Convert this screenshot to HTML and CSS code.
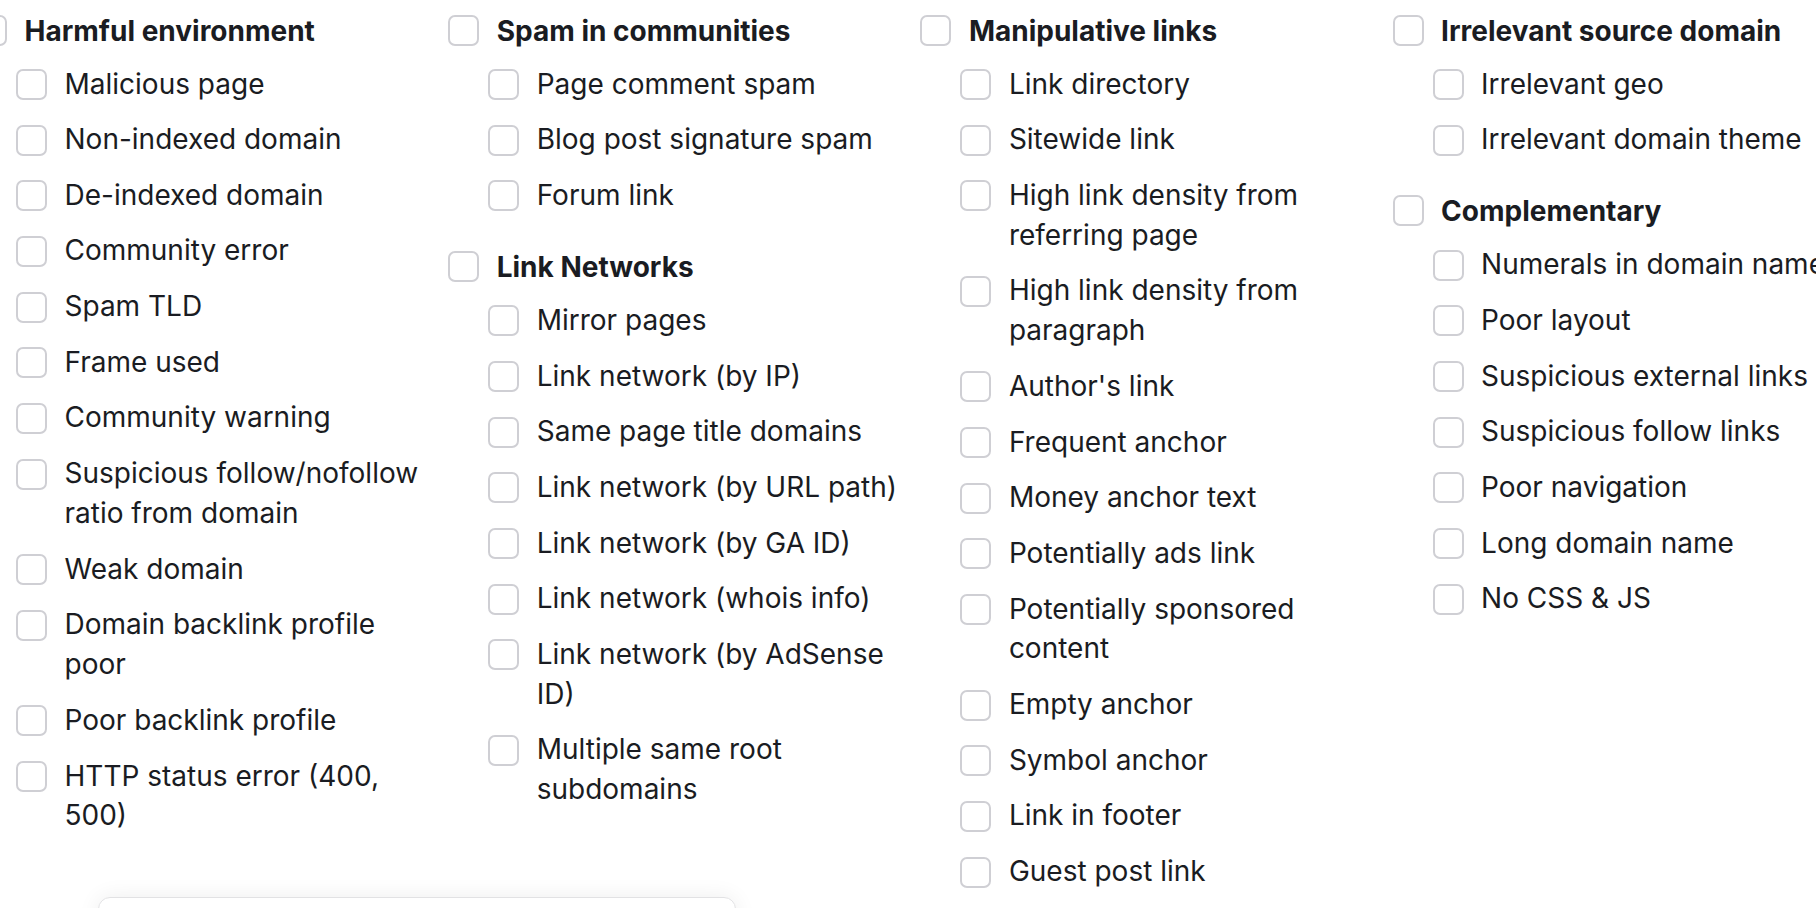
FILE: index.html
```html
<!DOCTYPE html>
<html lang="en">
<head>
<meta charset="utf-8">
<title>Link filters</title>
<link rel="stylesheet" href="styles.css">
</head>
<body>
<div class="page">
  <div class="grid">
    <div class="col">
      <section class="group">
        <label class="row head"><span class="box"></span><span class="txt">Harmful environment</span></label>
        <ul class="children">
          <li class="row"><span class="box"></span><span class="txt">Malicious page</span></li>
          <li class="row"><span class="box"></span><span class="txt">Non-indexed domain</span></li>
          <li class="row"><span class="box"></span><span class="txt">De-indexed domain</span></li>
          <li class="row"><span class="box"></span><span class="txt">Community error</span></li>
          <li class="row"><span class="box"></span><span class="txt">Spam TLD</span></li>
          <li class="row"><span class="box"></span><span class="txt">Frame used</span></li>
          <li class="row"><span class="box"></span><span class="txt">Community warning</span></li>
          <li class="row"><span class="box"></span><span class="txt">Suspicious follow/nofollow ratio from domain</span></li>
          <li class="row"><span class="box"></span><span class="txt">Weak domain</span></li>
          <li class="row"><span class="box"></span><span class="txt">Domain backlink profile poor</span></li>
          <li class="row"><span class="box"></span><span class="txt">Poor backlink profile</span></li>
          <li class="row"><span class="box"></span><span class="txt">HTTP status error (400, 500)</span></li>
        </ul>
      </section>
    </div>
    <div class="col">
      <section class="group">
        <label class="row head"><span class="box"></span><span class="txt">Spam in communities</span></label>
        <ul class="children">
          <li class="row"><span class="box"></span><span class="txt">Page comment spam</span></li>
          <li class="row"><span class="box"></span><span class="txt">Blog post signature spam</span></li>
          <li class="row"><span class="box"></span><span class="txt">Forum link</span></li>
        </ul>
      </section>
      <section class="group">
        <label class="row head"><span class="box"></span><span class="txt">Link Networks</span></label>
        <ul class="children">
          <li class="row"><span class="box"></span><span class="txt">Mirror pages</span></li>
          <li class="row"><span class="box"></span><span class="txt">Link network (by IP)</span></li>
          <li class="row"><span class="box"></span><span class="txt">Same page title domains</span></li>
          <li class="row"><span class="box"></span><span class="txt">Link network (by URL path)</span></li>
          <li class="row"><span class="box"></span><span class="txt">Link network (by GA ID)</span></li>
          <li class="row"><span class="box"></span><span class="txt">Link network (whois info)</span></li>
          <li class="row"><span class="box"></span><span class="txt">Link network (by AdSense ID)</span></li>
          <li class="row"><span class="box"></span><span class="txt">Multiple same root subdomains</span></li>
        </ul>
      </section>
    </div>
    <div class="col">
      <section class="group">
        <label class="row head"><span class="box"></span><span class="txt">Manipulative links</span></label>
        <ul class="children">
          <li class="row"><span class="box"></span><span class="txt">Link directory</span></li>
          <li class="row"><span class="box"></span><span class="txt">Sitewide link</span></li>
          <li class="row"><span class="box"></span><span class="txt">High link density from referring page</span></li>
          <li class="row"><span class="box"></span><span class="txt">High link density from paragraph</span></li>
          <li class="row"><span class="box"></span><span class="txt">Author's link</span></li>
          <li class="row"><span class="box"></span><span class="txt">Frequent anchor</span></li>
          <li class="row"><span class="box"></span><span class="txt">Money anchor text</span></li>
          <li class="row"><span class="box"></span><span class="txt">Potentially ads link</span></li>
          <li class="row"><span class="box"></span><span class="txt">Potentially sponsored content</span></li>
          <li class="row"><span class="box"></span><span class="txt">Empty anchor</span></li>
          <li class="row"><span class="box"></span><span class="txt">Symbol anchor</span></li>
          <li class="row"><span class="box"></span><span class="txt">Link in footer</span></li>
          <li class="row"><span class="box"></span><span class="txt">Guest post link</span></li>
        </ul>
      </section>
    </div>
    <div class="col">
      <section class="group">
        <label class="row head"><span class="box"></span><span class="txt">Irrelevant source domain</span></label>
        <ul class="children">
          <li class="row"><span class="box"></span><span class="txt">Irrelevant geo</span></li>
          <li class="row"><span class="box"></span><span class="txt">Irrelevant domain theme</span></li>
        </ul>
      </section>
      <section class="group">
        <label class="row head"><span class="box"></span><span class="txt">Complementary</span></label>
        <ul class="children">
          <li class="row"><span class="box"></span><span class="txt">Numerals in domain name</span></li>
          <li class="row"><span class="box"></span><span class="txt">Poor layout</span></li>
          <li class="row"><span class="box"></span><span class="txt">Suspicious external links</span></li>
          <li class="row"><span class="box"></span><span class="txt">Suspicious follow links</span></li>
          <li class="row"><span class="box"></span><span class="txt">Poor navigation</span></li>
          <li class="row"><span class="box"></span><span class="txt">Long domain name</span></li>
          <li class="row"><span class="box"></span><span class="txt">No CSS &amp; JS</span></li>
        </ul>
      </section>
    </div>
  </div>
</div>
<div class="panel"></div>
</body>
</html>
```

FILE: styles.css
```css
html, body {
  margin: 0;
  padding: 0;
  background: #ffffff;
  overflow: hidden;
  width: 1816px;
  height: 908px;
}

body {
  font-family: Inter, "Noto Sans", "Liberation Sans", sans-serif;
  color: #1a1c22;
  font-size: 28px;
  line-height: 39.9px;
}

.page {
  padding-top: 11.6px;
}

.grid {
  display: grid;
  grid-template-columns: repeat(4, 455px);
  column-gap: 17.2px;
  margin-left: -24px;
  width: 1872px;
}

.group + .group {
  margin-top: 32.3px;
}

.row {
  display: flex;
  align-items: flex-start;
  gap: 17.5px;
}

.box {
  flex: none;
  box-sizing: border-box;
  width: 31px;
  height: 31px;
  margin-top: 4.5px;
  border: 2px solid #cfcfd4;
  border-radius: 7px;
  background: #ffffff;
}

.head .box {
  margin-top: 3px;
}

.head .txt {
  font-weight: 700;
}

.children {
  list-style: none;
  margin: 13px 0 0 0;
  padding: 0 0 0 40px;
  display: flex;
  flex-direction: column;
  gap: 15.75px;
}

.panel {
  position: fixed;
  left: 98px;
  top: 897px;
  width: 638px;
  height: 200px;
  box-sizing: border-box;
  border: 1px solid #e2e2e4;
  border-radius: 12px;
  background: #ffffff;
  box-shadow: 0 0 22px rgba(0, 0, 0, 0.07);
}
```
